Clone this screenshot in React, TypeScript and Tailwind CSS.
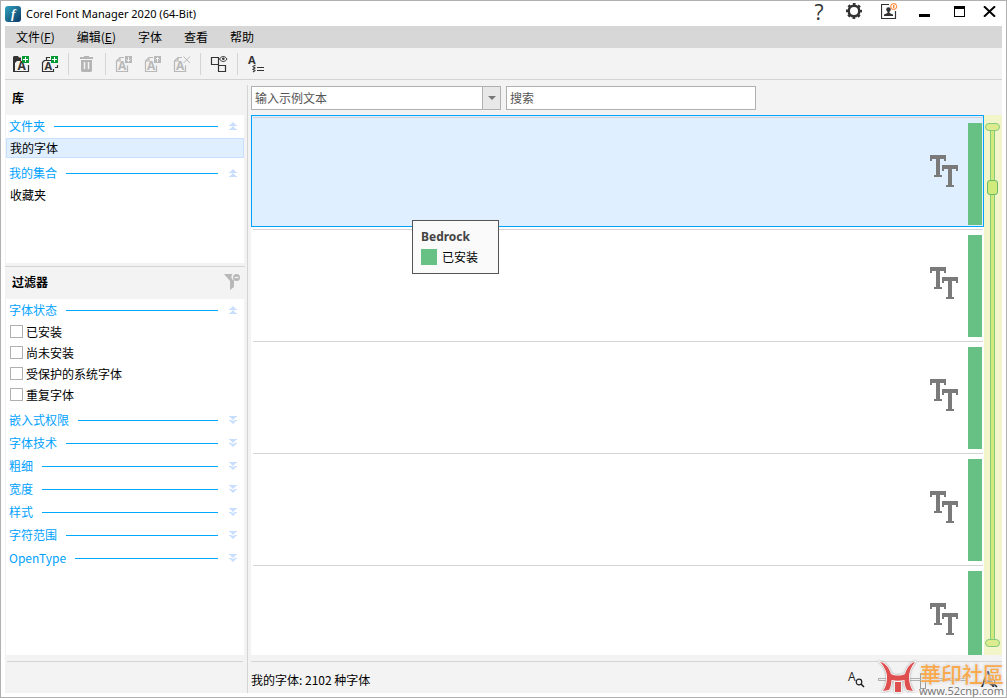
import React, { useState } from "react";

type IconProps = { children: React.ReactNode; className?: string };

const ToolIcon: React.FC<IconProps> = ({ children, className }) => (
  <svg
    width="18"
    height="18"
    viewBox="0 0 18 18"
    fill="none"
    className={`overflow-visible ${className}`}
  >
    {children}
  </svg>
);

const LetterA: React.FC<{ x: number; y: number; size: number }> = ({
  x,
  y,
  size,
}) => (
  <text
    x={x}
    y={y}
    fontSize={size}
    fill="currentColor"
    className="font-['Open_Sans',sans-serif] font-bold"
  >
    A
  </text>
);

const GreenPlus: React.FC = () => (
  <g>
    <rect x="9" y="0" width="7" height="7" fill="#009933" />
    <path d="M10 3.500h5M12.500 1v5" stroke="#fff" strokeWidth="1" />
  </g>
);

const AddFolderIcon: React.FC = () => (
  <ToolIcon className="text-[#333]">
    <path d="M0 1l1-1h4l1 1.500h2V5H4L2 7v9H0z" fill="currentColor" />
    <path d="M1 15.500h14.500V9" stroke="currentColor" strokeWidth="1.200" />
    <LetterA x={4.5} y={14} size={12} />
    <GreenPlus />
  </ToolIcon>
);

const AddFontsIcon: React.FC = () => (
  <ToolIcon className="text-[#333]">
    <path
      d="M8 1.500H4.500V5M2.500 4.500L.5 6.500v9h11V13M9 4.500H2.500M13 11.500h2.500V9"
      stroke="currentColor"
      strokeWidth="1.200"
    />
    <LetterA x={2.5} y={14} size={11} />
    <GreenPlus />
  </ToolIcon>
);

const TrashIcon: React.FC = () => (
  <ToolIcon className="text-[#b5b5b5]">
    <path d="M1 1h4V0h5v1h4v2H1zM2 4h11v11l-1 1H3l-1-1z" fill="currentColor" />
    <path d="M5.500 6v7M9.500 6v7" stroke="#f3f3f3" strokeWidth="1.500" />
  </ToolIcon>
);

const FontPageIcon: React.FC<{ kind: "down" | "up" | "remove" }> = ({
  kind,
}) => (
  <ToolIcon className="text-[#b8b8b8]">
    <path
      d="M8 1.500H4L.5 5v10.500h11V9.500M4 2v3H1"
      stroke="currentColor"
      strokeWidth="1.200"
    />
    <LetterA x={2} y={14} size={12} />
    {kind === "remove" ? (
      <path d="M9.500.5l6.500 6.500M16 .5L9.500 7" stroke="currentColor" />
    ) : (
      <>
        <rect x="9" width="7" height="7" fill="currentColor" />
        <path
          d={
            kind === "down"
              ? "M12.500 1v4.500M10.500 3.500l2 2 2-2"
              : "M12.500 6V1.500M10.500 3.500l2-2 2 2"
          }
          stroke="#f3f3f3"
          strokeWidth="1"
        />
      </>
    )}
  </ToolIcon>
);

const PreviewIcon: React.FC = () => (
  <ToolIcon className="text-[#333]">
    <path d="M.5 1.500h7v7h-7zM7.500 9.500h7v6h-7z" stroke="currentColor" strokeWidth="1.200" />
    <path
      d="M8.500 3c2-3.300 5.500-3.300 7.500 0-2 3.300-5.500 3.300-7.500 0z"
      fill="#f3f3f3"
      stroke="currentColor"
    />
    <circle cx="12.300" cy="2.800" r="1.300" fill="currentColor" />
  </ToolIcon>
);

const DetailsIcon: React.FC = () => (
  <ToolIcon className="text-[#333]">
    <LetterA x={0} y={8} size={11} />
    <path d="M9 11.500h7M9 14.500h7" stroke="currentColor" strokeWidth="1.200" />
    <path
      d="M7.500 9L5 10.500l2 1.500-2 1.500 2 1-2 1.500"
      stroke="currentColor"
      strokeWidth="1.100"
    />
  </ToolIcon>
);

const TrueTypeIcon: React.FC = () => (
  <svg
    width="28"
    height="32"
    viewBox="0 0 28 32"
    fill="#7a7a7a"
    shapeRendering="crispEdges"
    role="img"
    aria-label="TrueType"
  >
    <rect width="16" height="4" />
    <rect y="4" width="2" height="2" />
    <rect x="14" y="4" width="2" height="2" />
    <rect x="6" y="4" width="4" height="16" />
    <rect x="4" y="20" width="8" height="2" />
    <rect x="12" y="10" width="16" height="4" />
    <rect x="12" y="14" width="2" height="2" />
    <rect x="26" y="14" width="2" height="2" />
    <rect x="18" y="14" width="4" height="16" />
    <rect x="16" y="30" width="8" height="2" />
  </svg>
);

const FunnelIcon: React.FC = () => (
  <svg width="16" height="17" viewBox="0 0 16 17" fill="#b8b8b8">
    <path d="M0 0h8.500a4 4 0 0 0 1.500 6.500V13l-4 3V7z" />
    <circle cx="12.500" cy="3.500" r="3.500" />
    <path d="M10.500 3.500h4" stroke="#f3f3f3" strokeWidth="1.200" />
  </svg>
);

const DoubleArrow: React.FC<{ open: boolean }> = ({ open }) => (
  <svg width="8" height="9" viewBox="0 0 8 9" fill="#c8deff">
    {open ? (
      <path d="M4 0l3 3h1v1H0V3h1zM4 4l3 3h1v1H0V7h1z" />
    ) : (
      <path d="M0 0h8v1H7L4 4 1 1H0zM0 4h2l2 1 2-1h2v1H7L4 8 1 5H0z" />
    )}
  </svg>
);

const ZoomLetterIcon: React.FC<{ size: number }> = ({ size }) => (
  <svg
    width="17"
    height="17"
    viewBox="0 0 17 17"
    fill="none"
    className="overflow-visible text-[#222]"
  >
    <text
      x="0"
      y={size > 12 ? 16 : 10}
      fontSize={size}
      fill="currentColor"
      className="font-['Open_Sans',sans-serif]"
    >
      A
    </text>
    <circle cx="11" cy="11" r="2.800" stroke="currentColor" strokeWidth="1.200" />
    <path d="M13 13l3 3" stroke="currentColor" strokeWidth="1.600" />
  </svg>
);

const Watermark: React.FC = () => (
  <div className="pointer-events-none absolute right-0.5 bottom-0 flex items-end">
    <svg
      width="42"
      height="38"
      viewBox="0 0 42 38"
      fill="#e04f50"
      stroke="#fff"
      strokeWidth="1.500"
      className="drop-shadow-[0_0_1px_#999] [paint-order:stroke]"
    >
      <path d="M3 3c6 1 9 6 11 12 4 2 10 2 14 0 2-6 5-11 10-12-4 5-6 10-6 15 0 6 2 11 4 14l-6-1c-2-3-2.500-6-2.500-10-4 1-9 1-13 0 0 4-1 7-2.500 10l-6 1c3-4 4-9 4-14C10 13 7 7 3 3z" />
      <path d="M18 23h6v10h-6z" />
    </svg>
    <div className="flex flex-col items-end">
      <span className="font-['Noto_Sans_CJK_TC',sans-serif] text-[21px] leading-6 font-medium text-[#f9a94b] [text-shadow:0_0_2px_#fff,0_0_3px_#aaa]">
        華印社區
      </span>
      <span className="font-['Noto_Sans',sans-serif] text-[11px] leading-3 text-[#777] [text-shadow:0_0_2px_#fff]">
        www.52cnp.com
      </span>
    </div>
  </div>
);

const menus = [
  { label: "文件", hotkey: "F" },
  { label: "编辑", hotkey: "E" },
  { label: "字体" },
  { label: "查看" },
  { label: "帮助" },
];

const statusFilters = ["已安装", "尚未安装", "受保护的系统字体", "重复字体"];

const collapsedFilters = [
  "嵌入式权限",
  "字体技术",
  "粗细",
  "宽度",
  "样式",
  "字符范围",
  "OpenType",
];

const SectionHeader: React.FC<{ title: string; open?: boolean }> = ({
  title,
  open = false,
}) => (
  <button
    aria-expanded={open}
    className="flex h-[22px] w-full shrink-0 items-center pr-[7px] pl-[3px] text-[#00a2ff]"
  >
    <span>{title}</span>
    <span className="mr-[11px] ml-[9px] h-px flex-1 bg-[#00a8ff]" />
    <DoubleArrow open={open} />
  </button>
);

const Separator: React.FC = () => (
  <span className="-mt-[3px] mr-2.5 ml-2 h-[22px] w-px bg-[#d4d4d4]" />
);

const TitleBar: React.FC = () => (
  <header className="flex h-[25px] shrink-0 items-center">
    <svg width="16" height="16" viewBox="0 0 16 16">
      <defs>
        <linearGradient id="logo" x1="0" y1="0" x2="1" y2="1">
          <stop offset="0" stopColor="#2fa5bd" />
          <stop offset="1" stopColor="#0b3566" />
        </linearGradient>
      </defs>
      <rect width="16" height="16" rx="3" fill="url(#logo)" />
      <text
        x="6"
        y="12"
        fontSize="13"
        fill="#fff"
        className="font-['Liberation_Serif',serif] font-bold italic"
      >
        f
      </text>
    </svg>
    <h1 className="ml-[5px] pt-px font-['Noto_Sans',sans-serif] text-[11px]">
      Corel Font Manager 2020 (64-Bit)
    </h1>
    <div className="mr-[6px] ml-auto flex h-full items-start">
      <button
        aria-label="Help"
        className="mr-[21px] w-3 font-['Open_Sans',sans-serif] text-[21px] leading-[22px] text-[#333]"
      >
        ?
      </button>
      <button aria-label="Settings" className="mt-0.5 mr-[19px]">
        <svg width="16" height="16" viewBox="0 0 16 16" fill="none" stroke="#333">
          <circle cx="8" cy="8" r="5.300" strokeWidth="2.600" />
          <circle
            cx="8"
            cy="8"
            r="7"
            strokeWidth="2"
            strokeDasharray="2.750 2.750"
            strokeDashoffset="1.370"
          />
        </svg>
      </button>
      <button aria-label="Account" className="mt-0.5 mr-[21px]">
        <svg width="17" height="17" viewBox="0 0 17 17" fill="none">
          <path d="M8 1.500H.5v14h14V8" stroke="#333" strokeWidth="1.200" />
          <circle cx="7.500" cy="6.500" r="2.300" fill="#333" />
          <path d="M6.500 7h2v3l3.500 1.500V13H3v-1.500L6.500 10z" fill="#333" />
          <circle cx="12.700" cy="3.500" r="3" fill="#fff" stroke="#ff7a22" />
          <path d="M12.700 1.800v3.400" stroke="#ff7a22" strokeWidth="1.200" />
        </svg>
      </button>
      <button aria-label="Minimize" className="mt-[13px] mr-6">
        <svg width="11" height="3" viewBox="0 0 11 3">
          <rect width="11" height="3" fill="#000" />
        </svg>
      </button>
      <button
        aria-label="Maximize"
        className="mt-[5px] mr-[18px] h-[11px] w-[11px] border border-t-[3px] border-black"
      />
      <button aria-label="Close" className="mt-[5px]">
        <svg width="13" height="11" viewBox="0 0 13 11" stroke="#000" strokeWidth="2">
          <path d="M1 .3l11 10.400M12 .3L1 10.700" />
        </svg>
      </button>
    </div>
  </header>
);

const Toolbar: React.FC = () => (
  <div className="flex h-8 shrink-0 items-start border-b border-[#d4d4d4] pt-2 pl-2">
    <button aria-label="Add folder" className="mr-[11px]">
      <AddFolderIcon />
    </button>
    <button aria-label="Add fonts">
      <AddFontsIcon />
    </button>
    <Separator />
    <button aria-label="Delete" disabled>
      <TrashIcon />
    </button>
    <Separator />
    <button aria-label="Install" className="mr-[11px]" disabled>
      <FontPageIcon kind="down" />
    </button>
    <button aria-label="Uninstall" className="mr-[11px]" disabled>
      <FontPageIcon kind="up" />
    </button>
    <button aria-label="Remove" disabled>
      <FontPageIcon kind="remove" />
    </button>
    <Separator />
    <button aria-label="Preview">
      <PreviewIcon />
    </button>
    <Separator />
    <button aria-label="Details">
      <DetailsIcon />
    </button>
  </div>
);

const Sidebar: React.FC = () => {
  const [checked, setChecked] = useState<string[]>([]);

  const toggle = (name: string): void => {
    setChecked((prev) =>
      prev.includes(name) ? prev.filter((n) => n !== name) : [...prev, name]
    );
  };

  return (
    <aside className="flex w-[240px] shrink-0 flex-col">
      <h2 className="flex h-[35px] shrink-0 items-center pl-[7px] font-bold">库</h2>
      <div className="mx-px h-[148px] shrink-0 bg-white">
        <SectionHeader title="文件夹" open />
        <button className="mt-px mb-1 flex h-5 w-full items-center border border-[#c8dfff] bg-[#dfefff] pl-[3px]">
          我的字体
        </button>
        <SectionHeader title="我的集合" open />
        <button className="mt-px flex h-5 w-full items-center pl-1">收藏夹</button>
      </div>
      <div className="mt-[3px] flex h-[33px] shrink-0 items-center justify-between border-t border-[#d4d4d4] pr-[5px] pb-0.5 pl-[7px]">
        <h2 className="font-bold">过滤器</h2>
        <button aria-label="Clear filters">
          <FunnelIcon />
        </button>
      </div>
      <div className="mx-px flex-1 overflow-hidden bg-white">
        <SectionHeader title="字体状态" open />
        <div className="mb-1">
          {statusFilters.map((name) => (
            <label key={name} className="flex h-[21px] items-center gap-[3px] pl-1">
              <input
                type="checkbox"
                checked={checked.includes(name)}
                onChange={() => toggle(name)}
                className="h-[13px] w-[13px] appearance-none border border-[#b0b0b0] bg-white checked:bg-[#00a2ff]"
              />
              {name}
            </label>
          ))}
        </div>
        <div className="flex flex-col gap-px">
          {collapsedFilters.map((title) => (
            <SectionHeader key={title} title={title} />
          ))}
        </div>
      </div>
      <div className="mx-0.5 mt-1.5 h-8 shrink-0 border-t border-[#d4d4d4]" />
    </aside>
  );
};

const FontRow: React.FC<{ selected: boolean }> = ({ selected }) => (
  <li
    className={`flex h-28 shrink-0 flex-col border pt-px ${
      selected ? "border-[#00a2ff] bg-[#dfefff]" : "border-transparent"
    }`}
  >
    <div className="ml-px h-px shrink-0 bg-[#d4d4d4]" />
    <div className="mt-[5px] flex flex-1 justify-end pr-px">
      <div className="mt-8 mr-2.5">
        <TrueTypeIcon />
      </div>
      <div className="h-[102px] w-3.5 bg-[#67c184]" />
    </div>
  </li>
);

const Scroller: React.FC = () => (
  <div className="flex w-[18px] shrink-0 flex-col items-start bg-[#f1f5c9] py-2 pl-px">
    <span className="h-2 w-[15px] shrink-0 rounded-full border border-[#86cb7d] bg-[#dcec8f]" />
    <input
      type="range"
      aria-label="Scroll"
      defaultValue={10}
      className="m-0 ml-0.5 min-h-0 w-[11px] flex-1 appearance-none bg-[linear-gradient(90deg,#86cb7d_1px,#d0ea7c_1px,#d0ea7c_4px,#86cb7d_4px)] bg-[length:5px_100%] bg-center bg-no-repeat [writing-mode:vertical-lr] [&::-webkit-slider-thumb]:h-[15px] [&::-webkit-slider-thumb]:w-[11px] [&::-webkit-slider-thumb]:appearance-none [&::-webkit-slider-thumb]:rounded-[3px] [&::-webkit-slider-thumb]:border [&::-webkit-slider-thumb]:border-[#68b968] [&::-webkit-slider-thumb]:bg-[#d0ea7c]"
    />
    <span className="h-2 w-[15px] shrink-0 rounded-full border border-[#86cb7d] bg-[#dcec8f]" />
  </div>
);

const FontPanel: React.FC = () => (
  <main className="mt-[5px] ml-0.5 flex min-w-0 flex-1 flex-col border-l border-[#d4d4d4] pl-[3px]">
    <div className="mt-px mb-[5px] flex h-6 shrink-0 gap-[5px]">
      <div className="flex w-[250px] border border-[#b0b0b0] bg-white">
        <input
          aria-label="示例文本"
          defaultValue="输入示例文本"
          className="min-w-0 flex-1 px-[3px] text-[#555] outline-none"
        />
        <button
          aria-label="展开"
          className="flex w-[18px] items-center justify-center border-l border-[#b0b0b0] bg-[#e8e8e8]"
        >
          <svg width="8" height="4" viewBox="0 0 8 4">
            <path d="M0 0h8L4 4z" fill="#777" />
          </svg>
        </button>
      </div>
      <input
        type="search"
        aria-label="搜索"
        placeholder="搜索"
        className="w-[250px] border border-[#b0b0b0] bg-white px-[3px] outline-none placeholder:text-[#555]"
      />
    </div>
    <div className="relative flex min-h-0 flex-1">
      <ul className="flex min-w-0 flex-1 flex-col overflow-hidden bg-white">
        {[0, 1, 2, 3, 4].map((row) => (
          <FontRow key={row} selected={row === 0} />
        ))}
      </ul>
      <Scroller />
      <div
        role="tooltip"
        className="absolute top-[105px] left-[161px] flex w-[87px] flex-col gap-1 border border-[#555] bg-[#fafafa] px-2 py-2"
      >
        <span className="font-['Noto_Sans',sans-serif] leading-4 font-bold text-[#444]">
          Bedrock
        </span>
        <span className="flex items-center gap-[5px] leading-4">
          <span className="h-4 w-4 bg-[#67c184]" />
          已安装
        </span>
      </div>
    </div>
    <footer className="mt-1.5 flex h-8 shrink-0 items-center border-t border-[#d4d4d4] pt-1">
      <span>我的字体: 2102 种字体</span>
      <div className="mr-1 ml-auto flex items-center">
        <ZoomLetterIcon size={12} />
        <input
          type="range"
          aria-label="Preview size"
          defaultValue={50}
          className="mx-[13px] h-4 w-[90px] appearance-none bg-transparent [&::-webkit-slider-runnable-track]:h-[3px] [&::-webkit-slider-runnable-track]:border [&::-webkit-slider-runnable-track]:border-[#b0b0b0] [&::-webkit-slider-thumb]:-mt-1.5 [&::-webkit-slider-thumb]:h-4 [&::-webkit-slider-thumb]:w-1.5 [&::-webkit-slider-thumb]:appearance-none [&::-webkit-slider-thumb]:border [&::-webkit-slider-thumb]:border-[#999] [&::-webkit-slider-thumb]:bg-[#f3f3f3]"
        />
        <ZoomLetterIcon size={21} />
      </div>
    </footer>
  </main>
);

const App: React.FC = () => {
  return (
    <div
      lang="zh-CN"
      className="relative flex h-screen flex-col overflow-hidden border border-[#b0b0b0] bg-white px-1 pb-1 font-['Noto_Sans_CJK_SC',sans-serif] text-xs text-black"
    >
      <TitleBar />
      <div className="flex min-h-0 flex-1 flex-col bg-[#f3f3f3]">
        <nav className="flex h-[22px] shrink-0 items-center gap-[22px] bg-[#d7d7d7] pl-[11px]">
          {menus.map(({ label, hotkey }) => (
            <button key={label}>
              {label}
              {hotkey && (
                <>
                  (<u>{hotkey}</u>)
                </>
              )}
            </button>
          ))}
        </nav>
        <Toolbar />
        <div className="flex min-h-0 flex-1">
          <Sidebar />
          <FontPanel />
        </div>
      </div>
      <Watermark />
    </div>
  );
};

export default App;
